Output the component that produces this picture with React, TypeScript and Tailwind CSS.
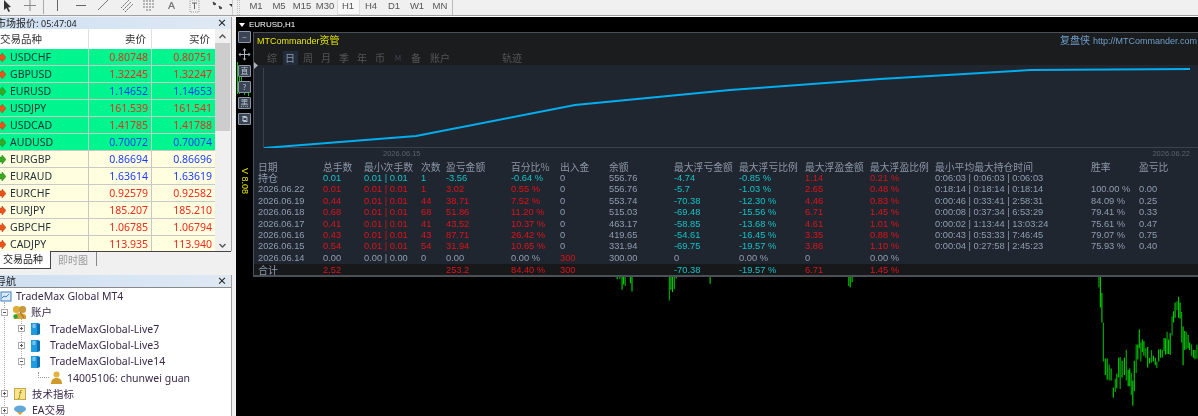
import { ReactNode } from "react"

const quotes = [
  { sym: "USDCHF", bid: "0.80748", ask: "0.80751", up: false, hot: true },
  { sym: "GBPUSD", bid: "1.32245", ask: "1.32247", up: false, hot: true },
  { sym: "EURUSD", bid: "1.14652", ask: "1.14653", up: true, hot: true },
  { sym: "USDJPY", bid: "161.539", ask: "161.541", up: false, hot: true },
  { sym: "USDCAD", bid: "1.41785", ask: "1.41788", up: false, hot: true },
  { sym: "AUDUSD", bid: "0.70072", ask: "0.70074", up: true, hot: true },
  { sym: "EURGBP", bid: "0.86694", ask: "0.86696", up: true, hot: false },
  { sym: "EURAUD", bid: "1.63614", ask: "1.63619", up: true, hot: false },
  { sym: "EURCHF", bid: "0.92579", ask: "0.92582", up: false, hot: false },
  { sym: "EURJPY", bid: "185.207", ask: "185.210", up: false, hot: false },
  { sym: "GBPCHF", bid: "1.06785", ask: "1.06794", up: false, hot: false },
  { sym: "CADJPY", bid: "113.935", ask: "113.940", up: false, hot: false },
]

const periods = ["M1", "M5", "M15", "M30", "H1", "H4", "D1", "W1", "MN"]
const tabs = ["综", "日", "周", "月", "季", "年", "币", "M", "备", "账户"]

const head = ["日期", "总手数", "最小次手数", "次数", "盈亏金额", "百分比%", "出入金", "余额", "最大浮亏金额", "最大浮亏比例", "最大浮盈金额", "最大浮盈比例", "最小平均最大持仓时间", "胜率", "盈亏比"]

const rows: string[][] = [
  ["持仓", "0.01", "0.01 | 0.01", "1", "-3.56", "-0.64 %", "0", "556.76", "-4.74", "-0.85 %", "1.14", "0.21 %", "0:06:03 | 0:06:03 | 0:06:03", "", ""],
  ["2026.06.22", "0.01", "0.01 | 0.01", "1", "3.02", "0.55 %", "0", "556.76", "-5.7", "-1.03 %", "2.65", "0.48 %", "0:18:14 | 0:18:14 | 0:18:14", "100.00 %", "0.00"],
  ["2026.06.19", "0.44", "0.01 | 0.01", "44", "38.71", "7.52 %", "0", "553.74", "-70.38", "-12.30 %", "4.46", "0.83 %", "0:00:46 | 0:33:41 | 2:58:31", "84.09 %", "0.25"],
  ["2026.06.18", "0.68", "0.01 | 0.01", "68", "51.86", "11.20 %", "0", "515.03", "-69.48", "-15.56 %", "6.71", "1.45 %", "0:00:08 | 0:37:34 | 6:53:29", "79.41 %", "0.33"],
  ["2026.06.17", "0.41", "0.01 | 0.01", "41", "43.52", "10.37 %", "0", "463.17", "-58.85", "-13.68 %", "4.61", "1.01 %", "0:00:02 | 1:13:44 | 13:03:24", "75.61 %", "0.47"],
  ["2026.06.16", "0.43", "0.01 | 0.01", "43", "87.71", "26.42 %", "0", "419.65", "-54.61", "-16.45 %", "3.35", "0.88 %", "0:00:43 | 0:53:33 | 7:46:45", "79.07 %", "0.75"],
  ["2026.06.15", "0.54", "0.01 | 0.01", "54", "31.94", "10.65 %", "0", "331.94", "-69.75", "-19.57 %", "3.86", "1.10 %", "0:00:04 | 0:27:58 | 2:45:23", "75.93 %", "0.40"],
  ["2026.06.14", "0.00", "0.00 | 0.00", "0", "0.00", "0.00 %", "300", "300.00", "0", "0.00 %", "0", "0.00 %", "", "", ""],
]

const gridCols = "grid grid-cols-[65px_41px_57px_25px_65px_49px_49px_65px_65px_66px_65px_65px_156px_48px_52px]"

function cellColor(row: number, col: number) {
  if (col === 0 || col === 12 || col === 13 || col === 14 || col === 7) return "text-[#8f9db2]"
  if (row === 0) {
    if (col === 10 || col === 11) return "text-[#dc1018]"
    if (col === 6) return "text-[#8f9db2]"
    return "text-[#10c4c8]"
  }
  if (row === 7) return col === 6 ? "text-[#dc1018]" : "text-[#8f9db2]"
  if (col === 6) return "text-[#8f9db2]"
  if (col === 8 || col === 9) return "text-[#10c4c8]"
  return "text-[#e4101a]"
}

// candle bars read off the chart: x, top, bottom (in 2.62x zoom units, origin 600,270)
const bars: number[][] = [
  [45, 18, 24], [52, 18, 24], [58, 18, 52], [62, 18, 38], [66, 18, 42], [80, 18, 35], [84, 18, 56], [182, 18, 80], [186, 18, 52], [190, 18, 58], [195, 18, 50], [200, 18, 22], [289, 18, 36], [652, 18, 42], [656, 18, 45], [661, 18, 32],
  [1308, 18, 45], [1312, 18, 98], [1316, 60, 138], [1320, 138, 240], [1325, 232, 275], [1330, 232, 288], [1335, 248, 290], [1340, 258, 290], [1346, 308, 335], [1351, 285, 320], [1355, 272, 310], [1360, 230, 282], [1364, 228, 312], [1369, 238, 282], [1375, 230, 275], [1380, 210, 290], [1385, 262, 305], [1389, 258, 305], [1393, 270, 328], [1397, 290, 356], [1401, 238, 318], [1406, 195, 270], [1410, 195, 235], [1414, 156, 205], [1418, 190, 240], [1422, 182, 215], [1426, 186, 225], [1431, 205, 230], [1436, 202, 256], [1441, 230, 245], [1446, 210, 243], [1451, 225, 240], [1456, 230, 250], [1460, 240, 257], [1465, 208, 240], [1470, 208, 230], [1475, 210, 230], [1479, 178, 212], [1483, 180, 222], [1487, 162, 220], [1491, 182, 220], [1495, 165, 222], [1500, 122, 172], [1504, 108, 138], [1508, 85, 125], [1513, 82, 105], [1517, 70, 125], [1521, 85, 128], [1525, 110, 190], [1529, 148, 250], [1533, 160, 210], [1537, 162, 208], [1542, 170, 205], [1546, 190, 210], [1551, 195, 225], [1556, 210, 230], [1560, 210, 234], [1565, 195, 232],
]

function Toolbar() {
  return (
    <div className="flex h-[16px] bg-[#f0f0f0] border-b border-[#a0a0a0] text-[#555]">
      <svg width="232" height="15" viewBox="0 0 232 15" className="shrink-0">
        <path d="M4 0l0 10 2.500-2 2 4 1.500-.8-2-3.700 3-.5z" fill="#333" />
        <path d="M30 0v11M24 5.500h12" stroke="#888" fill="none" />
        <path d="M43.500 0v14" stroke="#aaa" />
        <path d="M57.500 0v11" stroke="#666" />
        <path d="M76 5.500h10" stroke="#666" />
        <path d="M98 10l10-10" stroke="#777" />
        <path d="M121 8l8-8M123 10l8-8M125 12l8-8" stroke="#666" strokeDasharray="2 1" />
        <path d="M143 1h12M143 4h12M143 7h12M146 10h6" stroke="#777" strokeDasharray="2 1" />
        <path d="M171.500 2l-3 7M171.500 2l3 7M169.500 6.500h4" stroke="#777" strokeWidth="1.200" fill="none" />
        <rect x="190" y="0" width="9" height="12" fill="none" stroke="#999" strokeDasharray="1 1" />
        <path d="M192 3h5M194.500 3v6" stroke="#666" />
        <path d="M213 2l3 2-2 1zM219 6l3 2-2 1z" fill="#444" stroke="#444" />
        <path d="M229 4h6l-3 3z" fill="#333" />
      </svg>
      <div className="w-[4px] border-l border-[#ccc]" />
      <div className="w-[3px] ml-[1px] border-x border-dotted border-[#bbb]" />
      <div className="flex items-start pl-[4.500px] font-['Liberation_Sans',sans-serif] text-[9.500px] leading-[12px]">
        {periods.map((p) => (
          <div
            key={p}
            className={`w-[23px] h-[15px] text-center ${p === "H1" ? "bg-[#f7f7f7] border-x border-[#ddd] border-b" : ""}`}
          >
            {p}
          </div>
        ))}
        <div className="h-[15px] border-l border-[#bbb]" />
      </div>
    </div>
  )
}

function PanelHead({ children }: { children: ReactNode }) {
  return (
    <div className="flex items-center justify-between h-[12px] pr-[2px] bg-gradient-to-r from-[#cfe0f2] to-[#dfe9f4] text-[#222] text-[10px] leading-[12px]">
      <div className="ml-[-4px] whitespace-nowrap">{children}</div>
      <span className="text-[10px] font-bold text-[#222] pr-[2px]">×</span>
    </div>
  )
}

function Tick({ up }: { up: boolean }) {
  return (
    <svg width="6" height="9" viewBox="1 0 6 9" className="shrink-0">
      <path d="M0 2h3V0l4 4.500L3 9V7H0z" fill={up ? "#3aa822" : "#e8541c"} stroke={up ? "#1d7a10" : "#b83a10"} strokeWidth="0.500" />
    </svg>
  )
}

function MarketWatch() {
  return (
    <div className="h-[234px] flex flex-col border-r border-[#a0a0a0] relative">
      <PanelHead>
        市场报价: <span className="font-['Noto_Sans',sans-serif] text-[9px]">05:47:04</span>
      </PanelHead>
      <div className="flex flex-1 min-h-0">
        <div className="w-[215px] flex flex-col overflow-hidden h-[222px]">
          <div className="flex h-[20px] shrink-0 bg-white text-[10.500px] leading-[19px] text-[#333]">
            <div className="w-[89px] border-r border-[#e0e0e0] whitespace-nowrap">交易品种</div>
            <div className="w-[63px] border-r border-[#e0e0e0] text-right pr-[5px]">卖价</div>
            <div className="w-[63px] text-right pr-[5px]">买价</div>
          </div>
          {quotes.map((q) => (
            <div
              key={q.sym}
              className={`flex h-[17px] shrink-0 border-b border-[#c8c8c8] text-[10.500px] leading-[16px] font-['Noto_Sans',sans-serif] ${q.hot ? "bg-[#00f58f]" : "bg-[#ffffdf]"}`}
            >
              <div className="w-[89px] flex items-center gap-[4px] border-r border-[#c8c8c8] text-[#24323a]">
                <Tick up={q.up} />
                {q.sym}
              </div>
              <div className={`w-[63px] border-r border-[#c8c8c8] text-right pr-[3px] ${q.up ? "text-[#1a3cff]" : "text-[#f02a1c]"}`}>{q.bid}</div>
              <div className={`w-[63px] text-right pr-[3px] ${q.up ? "text-[#1a3cff]" : "text-[#f02a1c]"}`}>{q.ask}</div>
            </div>
          ))}
        </div>
        <div className="w-[15px] h-[222px] flex flex-col items-center bg-[#f0f0f0]">
          <svg width="9" height="14" viewBox="0 0 9 14" className="shrink-0"><path d="M1.500 9l3-3 3 3" stroke="#555" strokeWidth="1.300" fill="none" /></svg>
          <div className="w-[15px] h-[88px] bg-[#cdcdcd] shrink-0" />
          <div className="flex-1" />
          <svg width="9" height="14" viewBox="0 0 9 14" className="shrink-0"><path d="M1.500 7l3 3 3-3" stroke="#555" strokeWidth="1.300" fill="none" /></svg>
        </div>
      </div>
      <div className="absolute left-0 top-[234px] flex h-[18px] w-full bg-[#f0f0f0] text-[10px] leading-[16px]">
        <div className="w-[51px] bg-white border-r border-b border-[#444] pl-[3px] text-[#222] shrink-0">交易品种</div>
        <div className="flex-1 flex border-t border-[#444]">
          <div className="w-[46px] h-[14px] border-r border-[#888] pl-[7px] text-[#9a9a9a]">即时图</div>
        </div>
      </div>
    </div>
  )
}

function TreeBox({ open }: { open: boolean }) {
  return (
    <span className="w-[7px] h-[7px] border border-[#aaa] bg-white relative shrink-0">
      <span className="absolute left-[1px] top-[2px] w-[3px] h-[1px] bg-[#555]" />
      {!open && <span className="absolute left-[2px] top-[1px] w-[1px] h-[3px] bg-[#555]" />}
    </span>
  )
}

function ServerIcon() {
  return (
    <svg width="11" height="13" viewBox="0 0 11 13" className="shrink-0">
      <path d="M1 1h6l3 1v10l-3 1H1z" fill="#1f9be0" />
      <path d="M7 1l3 1v10l-3 1z" fill="#0b6fb5" />
      <path d="M2.500 3h3M2.500 5h3" stroke="#d6f0ff" />
    </svg>
  )
}

function Navigator() {
  const server = (name: string, open = false) => (
    <div className="flex items-center h-[16.300px] pl-[18px] gap-[5px]">
      <TreeBox open={open} />
      <ServerIcon />
      <span className="ml-[4px]">{name}</span>
    </div>
  )
  return (
    <div className="mt-[24px] flex-1 flex flex-col bg-white border-r border-[#a0a0a0] min-h-0">
      <PanelHead>导航</PanelHead>
      <div className="relative text-[10.500px] leading-[16px] text-[#3a2a4a] font-['Noto_Sans','Noto_Sans_CJK_SC',sans-serif] whitespace-nowrap border-t border-[#888]">
        <div className="absolute left-[4px] top-[14px] bottom-0 border-l border-dotted border-[#aaa]" />
        <div className="absolute left-[21px] top-[30px] h-[50px] border-l border-dotted border-[#aaa]" />
        <div className="flex items-center h-[16.300px] gap-[3px]">
          <svg width="13" height="13" viewBox="0 0 13 13" className="shrink-0"><rect x="1" y="2" width="10" height="9" fill="#dbeaf8" stroke="#3a7ec0" /><path d="M2 8l2-2 2 1 3-3" stroke="#3a7ec0" fill="none" /></svg>
          <span>TradeMax Global MT4</span>
        </div>
        <div className="relative flex items-center h-[16.300px] pl-[1px] gap-[2px]">
          <TreeBox open />
          <svg width="15" height="15" viewBox="0 0 15 15" className="shrink-0 ml-[2px]"><rect x="1" y="1" width="7" height="7" rx="3" fill="#e0ad3a" /><rect x="7" y="1" width="7" height="7" rx="3" fill="#c89a3a" /><path d="M2 14c0-4 2-6 5-6s7 1 7 3v3z" fill="#d9a23a" /><path d="M8 7l4 6" stroke="#8a6a20" /><circle cx="3.500" cy="11.500" r="2.200" fill="#2aa82a" /></svg>
          <span className="ml-[2px]">账户</span>
        </div>
        {server("TradeMaxGlobal-Live7")}
        {server("TradeMaxGlobal-Live3")}
        {server("TradeMaxGlobal-Live14", true)}
        <div className="flex items-center h-[16.300px] pl-[38px] gap-[2px]">
          <span className="w-[11px] h-[6px] border-l border-b border-dotted border-[#999] mt-[-6px]" />
          <svg width="11" height="13" viewBox="0 0 11 13" className="shrink-0"><circle cx="5.500" cy="3.500" r="3" fill="#e3b23c" /><path d="M0 13c0-4 2-6 5.500-6S11 9 11 13z" fill="#d09a2a" /></svg>
          <span className="ml-[3px]">14005106: chunwei guan</span>
        </div>
        <div className="relative flex items-center h-[16.300px] pl-[1px] gap-[3px]">
          <TreeBox open={false} />
          <span className="w-[12px] h-[12px] bg-[#f6e58d] border border-[#c9a94a] text-[8px] leading-[10px] text-center italic text-[#a07a10] shrink-0 ml-[3px]">f</span>
          <span className="ml-[3px]">技术指标</span>
        </div>
        <div className="relative flex items-center h-[16.300px] pl-[1px] gap-[3px]">
          <TreeBox open={false} />
          <svg width="14" height="12" viewBox="0 0 14 12" className="shrink-0 ml-[2px]"><ellipse cx="7" cy="5" rx="6" ry="3.500" fill="#5fa8d8" /><path d="M4 8l3 3 3-3z" fill="#d0a030" /></svg>
          <span className="ml-[2px]">EA交易</span>
        </div>
      </div>
    </div>
  )
}

function SideBtn({ children }: { children: ReactNode }) {
  return (
    <div className="w-[13px] h-[12px] border border-[#8a97a8] rounded-[1px] bg-[#3a4452] text-[#b8c4d4] text-[8px] leading-[10px] text-center shrink-0">
      {children}
    </div>
  )
}

function Dashboard() {
  return (
    <div className="flex-1 min-w-0 h-[245px] bg-[#1b1c1e] border-t border-[#4a5058] border-b-2 border-b-[#4a5058] border-l border-l-[#4a5058] flex flex-col relative">
      <div className="flex items-start justify-between h-[17px] pl-[3px] pt-[1px]">
        <span className="text-[#e6e600] text-[9px] leading-[14px] font-['Liberation_Sans','Noto_Sans_CJK_SC',sans-serif]">MTCommander<span className="text-[10px]">资管</span></span>
        <span className="text-[#6f9fcb] text-[9px] leading-[14px] pr-[1px] font-['Liberation_Sans','Noto_Sans_CJK_SC',sans-serif]">
          <span className="text-[10px] mr-[3px]">复盘侠</span>http://MTCommander.com
        </span>
      </div>
      <div className="flex h-[15px] pl-[11.500px] items-center gap-[5px] text-[#555] text-[10px] leading-[14px]">
        {tabs.map((t) => (
          <div key={t} className={`text-center ${t === "日" ? "w-[15px] mx-[-1px] bg-[#232c3b] text-[#8d9bb0] rounded-[1px]" : t === "账户" ? "ml-[1.500px] w-[22px]" : t === "M" ? "w-[13px] text-[8px] text-[#3f4654]" : "w-[13px]"}`}>
            {t}
          </div>
        ))}
        <div className="ml-[46px] text-[#555]">轨迹</div>
      </div>
      <div className="flex-1 min-h-0 bg-[#20262f] flex flex-col relative">
        <svg width="5" height="7" viewBox="0 0 5 7" className="absolute left-0 top-[-3px]"><path d="M0 0l4 3.500L0 7z" fill="#aab2bc" /></svg>
        <svg viewBox="254 65 944 83" className="w-[944px] h-[83px] shrink-0">
          <path d="M263.500 68v80M263 147.500h935" stroke="#3c424c" fill="none" />
          <path d="M264 148L416 136L575 105L730 90L880 79L1030 70L1190 69" stroke="#00aeef" strokeWidth="2" fill="none" />
        </svg>
        <div className="flex justify-between h-[11px] text-[7.500px] leading-[11px] text-[#5a6270] pl-[129px] pr-[8px] font-['Liberation_Sans',sans-serif]">
          <span>2026.06.15</span>
          <span>2026.06.22</span>
        </div>
        <div className={`${gridCols} pl-[4px] mt-[2px] text-[9.800px] leading-[12px] text-[#8c97a8] font-['Noto_Sans_CJK_SC',sans-serif] whitespace-nowrap`}>
          {head.map((h) => <div key={h}>{h}</div>)}
        </div>
        {rows.map((r, i) => (
          <div key={i} className={`${gridCols} pl-[4px] h-[11.400px] text-[9.300px] leading-[11.400px] font-['Liberation_Sans','Noto_Sans_CJK_SC',sans-serif] whitespace-nowrap`}>
            {r.map((v, j) => (
              <div key={j} className={`${cellColor(i, j)} ${i === 0 && j === 0 ? "text-[10px]" : ""}`}>{v}</div>
            ))}
          </div>
        ))}
        <div className={`${gridCols} pl-[4px] flex-1 bg-[#17181a] text-[9.300px] leading-[13px] text-[#e4101a] font-['Liberation_Sans','Noto_Sans_CJK_SC',sans-serif] whitespace-nowrap overflow-hidden`}>
          <div className="text-[#8f9db2] text-[10px]">合计</div>
          <div>2.52</div>
          <div />
          <div />
          <div>253.2</div>
          <div>84.40 %</div>
          <div>300</div>
          <div />
          <div className="text-[#10c4c8]">-70.38</div>
          <div className="text-[#10c4c8]">-19.57 %</div>
          <div>6.71</div>
          <div>1.45 %</div>
        </div>
      </div>
    </div>
  )
}

function ChartWindow() {
  return (
    <div className="flex-1 min-w-0 flex flex-col bg-black ml-[4px] border-t border-white relative h-[400px]">
      <div className="flex items-center h-[15px] text-white text-[8px] font-['Liberation_Sans',sans-serif] pl-[3px] gap-[4px]">
        <svg width="6" height="4" viewBox="0 0 6 4"><path d="M0 0h6L3 4z" fill="#fff" /></svg>
        EURUSD,H1
      </div>
      <div className="flex">
        <div className="w-[17px] shrink-0 flex flex-col items-center gap-[4px] mt-[-1px] relative">
          <svg width="14" height="34" viewBox="0 0 14 34" className="absolute left-0 top-[31px]"><path d="M1.500 0v32M3.500 10v22M5.500 12v8M12.500 28v6M8.500 28v5" stroke="#00c800" /></svg>
          <SideBtn>−</SideBtn>
          <svg width="13" height="13" viewBox="0 0 13 13" className="mt-[1px] shrink-0 relative"><path d="M6.500 0l2 2.500h-1.500v3.500h3.500v-1.500l2 2-2 2v-1.500h-3.500v3.500h1.500l-2 2-2-2h1.500v-3.500h-3.500v1.500l-2-2 2-2v1.500h3.500v-3.500h-1.500z" fill="#aab6c6" /></svg>
          <div className="relative"><SideBtn>直</SideBtn></div>
          <div className="relative"><SideBtn>?</SideBtn></div>
          <div className="relative"><SideBtn>黑</SideBtn></div>
          <div className="relative"><SideBtn>⧉</SideBtn></div>
          <div className="mt-[39px] text-[#e6e600] text-[9px] leading-[10px] [writing-mode:vertical-rl] font-['Liberation_Sans',sans-serif] whitespace-nowrap">V 8.08</div>
        </div>
        <Dashboard />
      </div>
      <svg viewBox="600 277 598 139" className="absolute left-[364px] top-[260px] w-[598px] h-[139px]">
        {bars.map(([x, a, b], i) => (
          <path key={i} d={`M${(600 + x / 2.622).toFixed(1)} ${(270 + a / 2.622).toFixed(1)}V${(270 + b / 2.622).toFixed(1)}`} stroke={i % 3 === 1 ? "#00a000" : "#00c800"} strokeWidth="1.200" />
        ))}
      </svg>
    </div>
  )
}

export default function App() {
  return (
    <div className="w-[1198px] h-[416px] overflow-hidden bg-[#f0f0f0] font-['Noto_Sans_CJK_SC',sans-serif] blur-[0.3px]">
      <Toolbar />
      <div className="flex h-[400px]">
        <div className="w-[232px] shrink-0 flex flex-col bg-[#f0f0f0] pt-[1px]">
          <MarketWatch />
          <Navigator />
        </div>
        <ChartWindow />
      </div>
    </div>
  )
}
